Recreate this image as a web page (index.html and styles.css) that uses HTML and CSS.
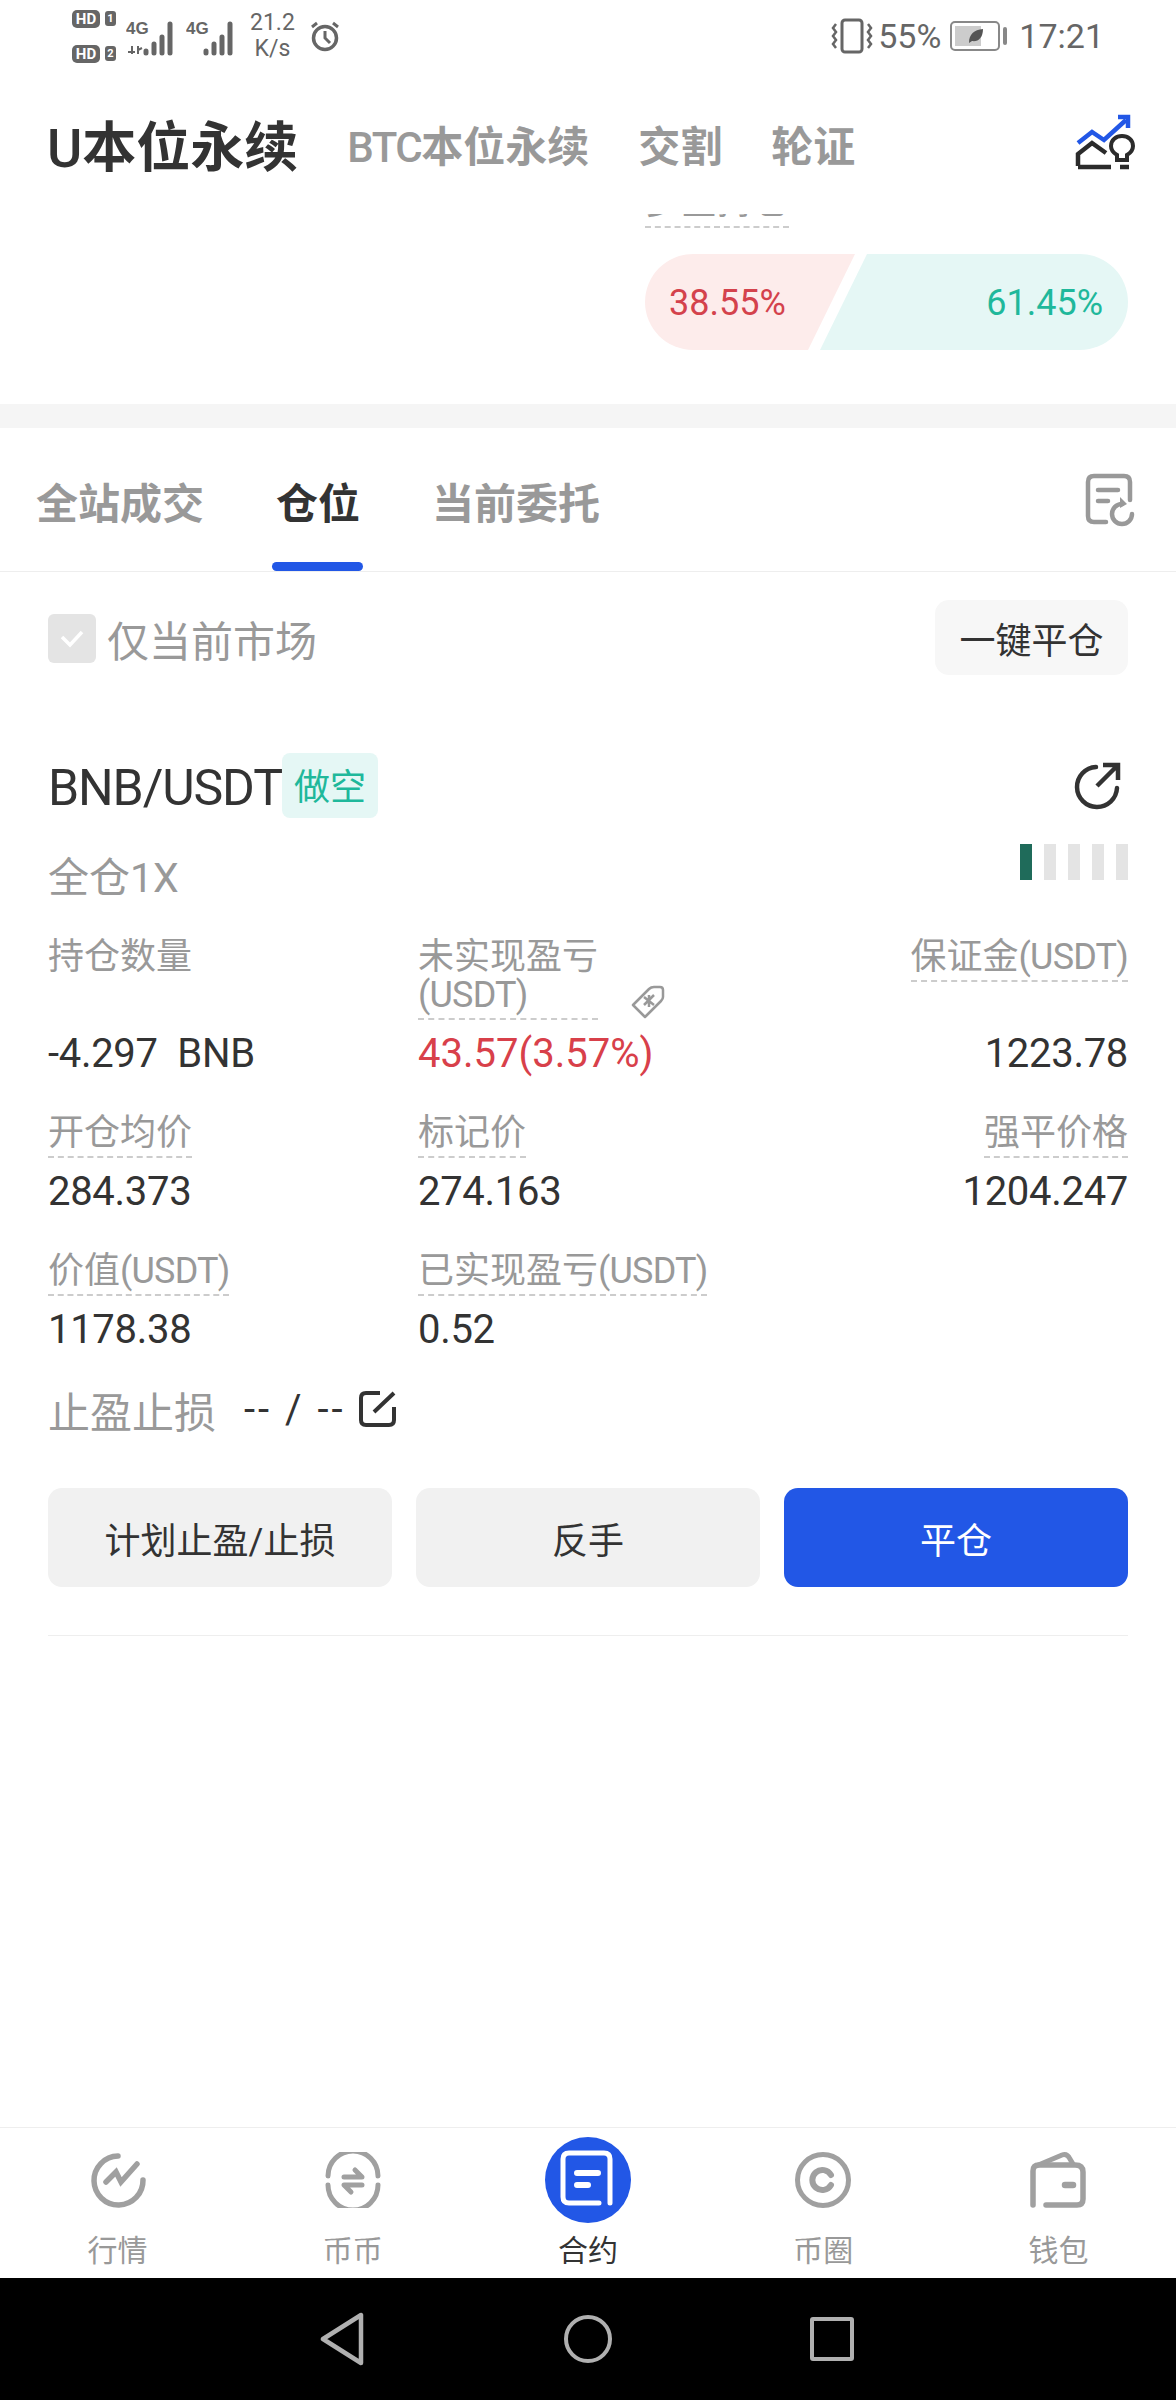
FILE: index.html
```html
<!DOCTYPE html>
<html>
<head>
    <title>合约</title>
    <meta charset="utf-8">
    <link rel="stylesheet" href="styles.css">
</head>
<body>
<div class="page">
    <div class="status-bar">
        <div class="status-left">
            <div class="sims">
                <div class="sim"><span class="hd">HD</span><span class="sim-no">1</span></div>
                <div class="sim"><span class="hd">HD</span><span class="sim-no">2</span></div>
            </div>
            <svg class="signal" width="50" height="40" viewBox="0 0 50 40">
                <text x="0" y="18" class="net">4G</text>
                <path d="M2 36H9M6 30V38M12 30V38M12 34L16 32" class="net-arrows"/>
                <path d="M20 35V37M28 28V37M36 21V37M44 8V37" class="bars"/>
            </svg>
            <svg class="signal" width="50" height="40" viewBox="0 0 50 40">
                <text x="0" y="18" class="net">4G</text>
                <path d="M20 35V37M28 28V37M36 21V37M44 8V37" class="bars"/>
            </svg>
            <div class="speed"><span>21.2</span><span>K/s</span></div>
            <svg class="alarm" width="32" height="32" viewBox="0 0 32 32">
                <circle cx="16" cy="18" r="11.5" fill="none" stroke="#666" stroke-width="3.5"/>
                <path d="M16 11V18L21 23M3 7L8 3M29 7L24 3" fill="none" stroke="#666" stroke-width="3"/>
            </svg>
        </div>
        <div class="status-right">
            <svg width="42" height="36" viewBox="0 0 42 36">
                <rect x="11" y="2" width="20" height="32" rx="3" fill="none" stroke="#666" stroke-width="3"/>
                <path d="M5 6L2 10L5 14L2 18L5 22L2 26L5 30M37 6L40 10L37 14L40 18L37 22L40 26L37 30" fill="none" stroke="#666" stroke-width="2.5"/>
            </svg>
            <span class="percent">55%</span>
            <div class="battery">
                <div class="battery-body">
                    <div class="battery-fill"></div>
                    <svg class="leaf" width="16" height="16" viewBox="0 0 16 16"><path d="M1 15C1 6 6 2 15 1C15 10 10 14 4 13Z" fill="#555"/></svg>
                </div>
                <div class="battery-nub"></div>
            </div>
            <span class="clock">17:21</span>
        </div>
    </div>

    <div class="header">
        <span class="title"><span class="title-u">U</span>本位永续</span>
        <span class="header-link"><span class="header-latin">BTC</span>本位永续</span>
        <span class="header-link">交割</span>
        <span class="header-link">轮证</span>
        <svg class="header-icon" width="60" height="60" viewBox="0 0 60 60">
            <path d="M3 32L17 21L29 29L51 9" fill="none" stroke="#2257e6" stroke-width="4.5"/>
            <path d="M43 6H53V17" fill="none" stroke="#2257e6" stroke-width="4.5"/>
            <path d="M3 55V43L17 32L31 42M3 56H36M45 56H54" fill="none" stroke="#2b2b2b" stroke-width="4.5"/>
            <path d="M42 49V44C37 41 36 38 36 35C36 29 41 25 47 25C53 25 58 29 58 35C58 38 57 41 52 44V49Z" fill="none" stroke="#2b2b2b" stroke-width="4"/>
        </svg>
    </div>

    <div class="market">
        <div class="ratio-head"><span>多空持仓</span></div>
        <div class="ratio-pill">
            <div class="ratio-long">38.55%</div>
            <div class="ratio-short">61.45%</div>
        </div>
    </div>
    <div class="gap-band"></div>

    <div class="tabs">
        <span class="tab">全站成交</span>
        <span class="tab tab-active">仓位</span>
        <span class="tab">当前委托</span>
        <svg class="tabs-icon" width="50" height="54" viewBox="0 0 50 54">
            <path d="M45 27V9Q45 3 39 3H9Q3 3 3 9V43Q3 49 9 49H21M13 17H33M13 28H23" fill="none" stroke="#999" stroke-width="4.5" stroke-linecap="round"/>
            <path d="M37 31A10 10 0 1 0 47 41" fill="none" stroke="#999" stroke-width="4.5" stroke-linecap="round"/>
            <path d="M35 24L42 31L35 35Z" fill="#999"/>
        </svg>
    </div>

    <div class="content">
        <div class="filter-row">
            <div class="check-wrap">
                <span class="checkbox">
                    <svg width="26" height="20" viewBox="0 0 26 20"><path d="M3 8L11 16L23 3" fill="none" stroke="#fff" stroke-width="3.5"/></svg>
                </span>
                <span class="check-text">仅当前市场</span>
            </div>
            <button class="close-all">一键平仓</button>
        </div>

        <div class="card">
            <div class="card-head">
                <span class="pair">BNB/USDT</span>
                <span class="side-tag">做空</span>
                <svg class="share-icon" width="48" height="50" viewBox="0 0 48 50">
                    <path d="M23 6A20 20 0 1 0 44 27" fill="none" stroke="#333" stroke-width="4.5" stroke-linecap="round"/>
                    <path d="M24 25L43 6M30 4H45V19" fill="none" stroke="#333" stroke-width="4.5"/>
                </svg>
            </div>
            <div class="mode-row">
                <span class="mode">全仓1X</span>
                <div class="risk">
                    <i class="risk-on"></i><i></i><i></i><i></i><i></i>
                </div>
            </div>

            <div class="stats">
                <div class="stat">
                    <span class="label">持仓数量</span>
                    <span class="value">-4.297 BNB</span>
                </div>
                <div class="stat">
                    <div class="label-row">
                        <span class="label dash">未实现盈亏<br><span class="unit">(USDT)</span></span>
                        <svg width="36" height="36" viewBox="0 0 36 36">
                            <path d="M3 21L19 5Q21 3 24 3H30Q33 3 33 6V13Q33 15 31 17L15 33Z" fill="none" stroke="#999" stroke-width="2.5" stroke-linejoin="round"/>
                            <path d="M14 21L24 11M14 13L24 21M19 11V23" fill="none" stroke="#999" stroke-width="2.5"/>
                        </svg>
                    </div>
                    <span class="value value-red">43.57(3.57%)</span>
                </div>
                <div class="stat stat-right">
                    <span class="label dash">保证金<span class="unit">(USDT)</span></span>
                    <span class="value">1223.78</span>
                </div>
                <div class="stat">
                    <span class="label dash">开仓均价</span>
                    <span class="value">284.373</span>
                </div>
                <div class="stat">
                    <span class="label dash">标记价</span>
                    <span class="value">274.163</span>
                </div>
                <div class="stat stat-right">
                    <span class="label dash">强平价格</span>
                    <span class="value">1204.247</span>
                </div>
                <div class="stat">
                    <span class="label dash">价值<span class="unit">(USDT)</span></span>
                    <span class="value">1178.38</span>
                </div>
                <div class="stat">
                    <span class="label dash">已实现盈亏<span class="unit">(USDT)</span></span>
                    <span class="value">0.52</span>
                </div>
            </div>

            <div class="stop-row">
                <span class="stop-label">止盈止损</span>
                <span class="stop-value">-- / --</span>
                <svg width="40" height="38" viewBox="0 0 40 38">
                    <path d="M22 3H8Q3 3 3 8V30Q3 35 8 35H31Q36 35 36 30V17M16 22L36 3" fill="none" stroke="#333" stroke-width="4"/>
                </svg>
            </div>

            <div class="actions">
                <button class="action">计划止盈/止损</button>
                <button class="action">反手</button>
                <button class="action action-primary">平仓</button>
            </div>
        </div>
        <div class="card-line"></div>
    </div>

    <div class="bottom-nav">
        <div class="nav-item">
            <div class="nav-icon">
                <svg width="56" height="56" viewBox="0 0 56 56">
                    <path d="M28 4A24.500 24.500 0 1 0 53 28" fill="none" stroke="#a0a0a0" stroke-width="5.500" stroke-linecap="round"/>
                    <path d="M16 30L26 20L31 30L47 12" fill="none" stroke="#a0a0a0" stroke-width="5.500" stroke-linecap="round"/>
                </svg>
            </div>
            <span>行情</span>
        </div>
        <div class="nav-item">
            <div class="nav-icon">
                <svg width="58" height="56" viewBox="0 0 58 56">
                    <path d="M4 24A25 25 0 0 1 54 24M4 33A25 25 0 0 0 54 33" fill="none" stroke="#a0a0a0" stroke-width="5" stroke-linecap="round"/>
                    <path d="M20 25H38L31 18M38 33H20L27 40" fill="none" stroke="#a0a0a0" stroke-width="5" stroke-linecap="round" stroke-linejoin="round"/>
                </svg>
            </div>
            <span>币币</span>
        </div>
        <div class="nav-item nav-active">
            <div class="nav-icon">
                <svg width="86" height="86" viewBox="0 0 86 86">
                    <circle cx="43" cy="43" r="43" fill="#2257e6"/>
                    <path d="M54 66H24Q18 66 18 60V22Q18 16 24 16H59Q65 16 65 22V66" fill="none" stroke="#fff" stroke-width="5" stroke-linecap="round"/>
                    <path d="M32 36H53M32 48H43" fill="none" stroke="#fff" stroke-width="6" stroke-linecap="round"/>
                </svg>
            </div>
            <span>合约</span>
        </div>
        <div class="nav-item">
            <div class="nav-icon">
                <svg width="58" height="56" viewBox="0 0 58 56">
                    <circle cx="29" cy="28" r="25.500" fill="none" stroke="#a0a0a0" stroke-width="5"/>
                    <path d="M37 23A10 10 0 1 0 37 33" fill="none" stroke="#a0a0a0" stroke-width="6" stroke-linecap="round"/>
                </svg>
            </div>
            <span>币圈</span>
        </div>
        <div class="nav-item">
            <div class="nav-icon">
                <svg width="58" height="58" viewBox="0 0 58 58">
                    <path d="M4 54V20Q4 14 10 14H46Q54 14 54 21V48Q54 54 48 54H17" fill="none" stroke="#a0a0a0" stroke-width="5.500" stroke-linecap="round"/>
                    <path d="M7 15L33 4Q38 2 41 8L44 13" fill="none" stroke="#a0a0a0" stroke-width="5"/>
                    <path d="M36 34H44" fill="none" stroke="#a0a0a0" stroke-width="6.500" stroke-linecap="round"/>
                </svg>
            </div>
            <span>钱包</span>
        </div>
    </div>

    <div class="android-nav">
        <svg width="44" height="54" viewBox="0 0 44 54">
            <path d="M3 27L41 3V51Z" fill="none" stroke="#b0b0b0" stroke-width="4.500" stroke-linejoin="round"/>
        </svg>
        <span class="android-home"></span>
        <span class="android-recent"></span>
    </div>
</div>
</body>
</html>
```

FILE: styles.css
```css
* { box-sizing: border-box; }
body { margin: 0; background: #fff; font-family: Roboto, "Noto Sans CJK SC", sans-serif; color: #333; }
button { font-family: inherit; border: none; }

.page { width: 1176px; height: 2400px; display: flex; flex-direction: column; overflow: hidden; }

/* status bar */
.status-bar { height: 72px; padding: 0 72px; display: flex; justify-content: space-between; align-items: center; color: #666; }
.status-left { display: flex; align-items: center; }
.sims { display: flex; flex-direction: column; gap: 17px; margin-right: 10px; }
.sim { display: flex; align-items: center; gap: 5px; }
.hd { width: 28px; height: 18px; border-radius: 5px; background: #666; color: #fff; font-size: 15px; font-weight: 700; line-height: 18px; text-align: center; }
.sim-no { width: 11px; height: 15px; border-radius: 3px; background: #666; color: #fff; font-size: 11px; font-weight: 700; line-height: 15px; text-align: center; }
.signal { margin-right: 10px; }
.net { font-family: "Liberation Sans", sans-serif; font-size: 17px; font-weight: 700; fill: #666; }
.net-arrows { fill: none; stroke: #666; stroke-width: 2; }
.bars { fill: none; stroke: #666; stroke-width: 5; stroke-linecap: round; }
.speed { display: flex; flex-direction: column; align-items: center; font-size: 23px; line-height: 26px; margin: 0 14px 0 4px; }
.status-right { display: flex; align-items: center; }
.percent { font-size: 34px; margin: 0 9px 0 5px; }
.battery { display: flex; align-items: center; gap: 3px; margin-right: 12px; }
.battery-body { position: relative; width: 50px; height: 30px; padding: 3px; border: 2px solid #888; border-radius: 5px; }
.battery-fill { width: 26px; height: 100%; background: #ccc; }
.leaf { position: absolute; left: 16px; top: 5px; }
.battery-nub { width: 4px; height: 18px; border-radius: 2px; background: #888; }
.clock { font-size: 34px; }

/* header */
.header { height: 142px; padding: 0 41px 0 47px; display: flex; align-items: center; gap: 49px; }
.title { font-size: 54px; font-weight: 700; color: #333; }
.title-u { font-weight: 500; }
.header-link { font-size: 42px; font-weight: 700; color: #999; }
.header-latin { font-weight: 500; letter-spacing: -1.5px; }
.header-icon { margin-left: auto; margin-top: -4px; }

/* long short ratio */
.market { height: 190px; padding: 0 48px 0 645px; }
.ratio-head { width: 144px; height: 14px; padding-bottom: 6px; overflow: hidden; display: flex; align-items: flex-end; border-bottom: 2px dashed #ccc; font-size: 36px; line-height: 36px; color: #999; }
.ratio-pill { display: flex; height: 96px; margin-top: 26px; font-size: 36px; line-height: 99px; }
.ratio-long { width: 210px; padding-left: 24px; border-radius: 48px 0 0 48px; background: #fdeceb; color: #d4424c; clip-path: polygon(0 0, 100% 0, calc(100% - 47px) 100%, 0 100%); }
.ratio-short { width: 308px; margin-left: -35px; padding-right: 25px; border-radius: 0 48px 48px 0; background: #e5f7f5; color: #1fb89b; text-align: right; clip-path: polygon(47px 0, 100% 0, 100% 100%, 0 100%); }
.gap-band { height: 24px; background: #f5f5f5; }

/* tabs */
.tabs { height: 144px; padding: 0 41px 0 36px; display: flex; align-items: center; gap: 72px; border-bottom: 1px solid #eee; }
.tab { position: relative; top: 1px; font-size: 42px; font-weight: 700; color: #999; }
.tab-active { color: #333; }
.tab-active::after { content: ""; position: absolute; left: -4px; right: -3px; bottom: -40px; height: 9px; border-radius: 5px; background: #2257e6; }
.tabs-icon { margin-left: auto; }

/* filter */
.content { flex: 1; padding: 28px 48px 0; }
.filter-row { display: flex; justify-content: space-between; align-items: flex-start; }
.check-wrap { display: flex; align-items: center; gap: 11px; margin-top: 8px; }
.checkbox { width: 48px; height: 49px; border-radius: 6px; background: #e4e4e4; display: flex; align-items: center; justify-content: center; }
.check-text { font-size: 42px; color: #999; }
.close-all { width: 193px; height: 75px; border-radius: 14px; background: #f7f7f7; font-size: 36px; color: #333; }

/* position card */
.card { margin-top: 78px; }
.card-head { display: flex; align-items: center; height: 65px; }
.pair { padding-top: 4px; font-size: 50px; letter-spacing: -1.1px; color: #333; }
.side-tag { height: 65px; padding: 0 12px; border-radius: 8px; background: #e5f7f5; color: #1fb89b; font-size: 36px; line-height: 71px; }
.share-icon { margin-left: auto; margin-right: 7px; }
.mode-row { display: flex; justify-content: space-between; align-items: flex-start; height: 58px; margin-top: 26px; }
.mode { font-size: 41px; line-height: 50px; margin-top: 9px; color: #999; }
.risk { display: flex; gap: 12px; }
.risk i { width: 12px; height: 36px; background: #e4e4e4; }
.risk .risk-on { background: #1f6b5a; }

.stats { display: grid; grid-template-columns: 370px 370px 340px; row-gap: 35px; margin-top: 36px; }
.stat { display: flex; flex-direction: column; justify-content: space-between; align-items: flex-start; }
.stat-right { align-items: flex-end; }
.label { font-size: 36px; line-height: 38px; color: #999; }
.unit { letter-spacing: -0.8px; }
.dash { padding-bottom: 4px; border-bottom: 2px dashed #ccc; }
.label-row { display: flex; align-items: flex-end; gap: 32px; }
.value { margin-top: 9px; font-size: 40px; line-height: 50px; letter-spacing: -0.3px; word-spacing: 10px; color: #333; }
.value-red { color: #d8404a; letter-spacing: 0; }

.stop-row { display: flex; align-items: center; height: 50px; margin-top: 29px; }
.stop-label { font-size: 42px; color: #999; }
.stop-value { margin: 0 12px 0 28px; font-size: 40px; letter-spacing: 3px; color: #333; }

.actions { display: flex; gap: 24px; margin-top: 54px; }
.action { flex: 1; height: 99px; border-radius: 14px; background: #f1f1f1; font-size: 36px; color: #333; }
.action-primary { background: #2257e6; color: #fff; }
.card-line { height: 1px; margin-top: 48px; background: #eee; }

/* bottom nav */
.bottom-nav { height: 151px; padding-top: 9px; display: flex; border-top: 1px solid #eee; }
.nav-item { flex: 1; display: flex; flex-direction: column; align-items: center; font-size: 30px; line-height: 36px; color: #999; }
.nav-icon { height: 86px; margin-bottom: 10px; display: flex; align-items: center; }
.nav-active { color: #333; }

.android-nav { height: 122px; padding-left: 320px; display: flex; align-items: center; gap: 200px; background: #000; }
.android-home { width: 48px; height: 48px; border: 4px solid #b0b0b0; border-radius: 50%; }
.android-recent { width: 44px; height: 44px; margin-left: -2px; border: 4px solid #b0b0b0; border-radius: 3px; }
```
